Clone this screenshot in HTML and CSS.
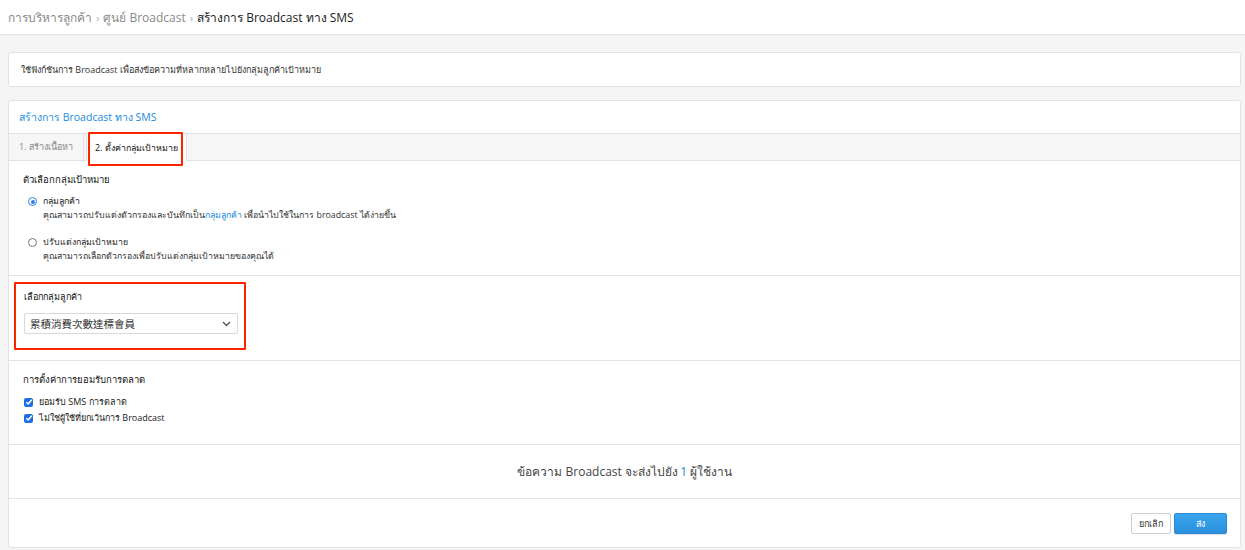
FILE: index.html
```html
<!DOCTYPE html>
<html lang="th">
<head>
<meta charset="utf-8">
<title>สร้างการ Broadcast ทาง SMS</title>
<link rel="stylesheet" href="styles.css">
</head>
<body>
<header class="topbar">
  <nav class="crumbs">
    <span class="crumb">การบริหารลูกค้า</span>
    <span class="sep">›</span>
    <span class="crumb">ศูนย์ Broadcast</span>
    <span class="sep">›</span>
    <span class="crumb current">สร้างการ Broadcast ทาง SMS</span>
  </nav>
</header>
<main class="page">
  <div class="info">ใช้ฟังก์ชันการ Broadcast เพื่อส่งข้อความที่หลากหลายไปยังกลุ่มลูกค้าเป้าหมาย</div>
  <section class="card">
    <div class="card-head">สร้างการ Broadcast ทาง SMS</div>
    <div class="tabs">
      <div class="tab">1. สร้างเนื้อหา</div>
      <div class="tab active">2. ตั้งค่ากลุ่มเป้าหมาย<span class="mark-tab"></span></div>
    </div>
    <div class="sec sec-target">
      <div class="sec-title">ตัวเลือกกลุ่มเป้าหมาย</div>
      <div class="opt">
        <span class="radio on"></span>
        <div class="opt-body">
          <div class="opt-label">กลุ่มลูกค้า</div>
          <div class="opt-desc">คุณสามารถปรับแต่งตัวกรองและบันทึกเป็น<span class="link">กลุ่มลูกค้า</span> เพื่อนำไปใช้ในการ broadcast ได้ง่ายขึ้น</div>
        </div>
      </div>
      <div class="opt">
        <span class="radio"></span>
        <div class="opt-body">
          <div class="opt-label">ปรับแต่งกลุ่มเป้าหมาย</div>
          <div class="opt-desc">คุณสามารถเลือกตัวกรองเพื่อปรับแต่งกลุ่มเป้าหมายของคุณได้</div>
        </div>
      </div>
    </div>
    <div class="sec sec-group">
      <div class="mark-box">
        <div class="field-label">เลือกกลุ่มลูกค้า</div>
        <div class="select">
          <span class="select-text">累積消費次數達標會員</span>
          <svg class="chev" width="9" height="6" viewBox="0 0 9 6"><path d="M1 1 L4.5 4.5 L8 1" fill="none" stroke="#555" stroke-width="1.4"/></svg>
        </div>
      </div>
    </div>
    <div class="sec sec-consent">
      <div class="sec-title">การตั้งค่าการยอมรับการตลาด</div>
      <div class="check-row"><span class="cbox"><svg width="8" height="8" viewBox="0 0 8 8"><path d="M1.3 4.2 L3.2 6 L6.8 1.8" fill="none" stroke="#fff" stroke-width="1.5"/></svg></span>ยอมรับ SMS การตลาด</div>
      <div class="check-row"><span class="cbox"><svg width="8" height="8" viewBox="0 0 8 8"><path d="M1.3 4.2 L3.2 6 L6.8 1.8" fill="none" stroke="#fff" stroke-width="1.5"/></svg></span>ไม่ใช่ผู้ใช้ที่ยกเว้นการ Broadcast</div>
    </div>
    <div class="summary">ข้อความ Broadcast จะส่งไปยัง <span class="count">1</span> ผู้ใช้งาน</div>
    <div class="actions">
      <button class="btn btn-cancel">ยกเลิก</button>
      <button class="btn btn-send">ส่ง</button>
    </div>
  </section>
</main>
</body>
</html>
```

FILE: styles.css
```css
* { box-sizing: border-box; }
html, body { margin: 0; padding: 0; }
body {
  background: #f5f5f5;
  font-family: "Open Sans", "Noto Sans", "Liberation Sans", sans-serif;
  color: #333;
  width: 1245px;
  height: 550px;
  overflow: hidden;
}
.topbar {
  height: 35px;
  background: #fff;
  border-bottom: 1px solid #e4e4e4;
  display: flex;
  align-items: center;
  padding-left: 8px;
}
.crumbs { display: flex; align-items: center; gap: 4px; font-size: 12px; }
.crumb { color: #8a8a8a; }
.crumb.current { color: #222; }
.sep { color: #aaa; font-size: 11px; }
.page { padding: 17px 4px 0 8px; display: flex; flex-direction: column; gap: 13px; }
.info {
  height: 35px;
  background: #fff;
  border: 1px solid #e2e2e2;
  border-radius: 3px;
  display: flex;
  align-items: center;
  padding-left: 12px;
  font-size: 9px;
  color: #333;
}
.card {
  background: #fff;
  border: 1px solid #e2e2e2;
  border-radius: 3px;
  height: 448px;
  display: flex;
  flex-direction: column;
}
.card-head {
  height: 33px;
  display: flex;
  align-items: center;
  padding-left: 10px;
  color: #1b8bdb;
  font-size: 10.5px;
  border-bottom: 1px solid #e2e2e2;
}
.tabs {
  height: 27px;
  background: #f6f6f6;
  border-bottom: 1px solid #e2e2e2;
  display: flex;
  align-items: stretch;
}
.tab {
  position: relative;
  flex: none;
  white-space: nowrap;
  padding: 0 0 0 10px;
  display: flex;
  align-items: center;
  font-size: 9px;
  color: #888;
  border-right: 1px solid #e2e2e2;
  width: 75px;
}
.tab.active {
  background: #fff;
  color: #111;
  width: 101px;
  margin-bottom: -1px;
  padding-left: 8px;
  border-left: 1px solid #e2e2e2;
  margin-left: 2px;
  font-size: 8.8px;
}
.mark-tab {
  position: absolute;
  left: 1px;
  top: -2px;
  width: 95px;
  height: 34px;
  border: 2.5px solid #ff2200;
  border-radius: 1px;
}
.sec { border-bottom: 1px solid #e4e4e4; }
.sec-target { height: 115px; padding: 11px 14px 0 14px; }
.sec-title { font-size: 9.5px; color: #111; margin-bottom: 7px; font-weight: 500; }
.opt { display: flex; gap: 6px; margin-bottom: 13px; }
.radio {
  width: 9px; height: 9px; border-radius: 50%;
  border: 1px solid #777;
  margin: 3px 0 0 5px;
  flex: none;
  position: relative;
  background: #fff;
}
.radio.on { border-color: #2f7fe0; }
.radio.on::after {
  content: "";
  position: absolute; left: 1.5px; top: 1.5px;
  width: 4px; height: 4px; border-radius: 50%;
  background: #2f7fe0;
}
.opt-body { font-size: 8.8px; line-height: 14px; }
.opt-label { color: #222; }
.opt-desc { color: #333; }
.link { color: #1b8bdb; }
.sec-group { height: 85px; padding: 6px 0 0 5px; }
.mark-box {
  width: 232px;
  height: 68px;
  border: 2.5px solid #ff2200;
  border-radius: 1px;
  padding: 6px 0 0 8px;
}
.field-label { font-size: 9px; color: #111; margin-bottom: 9px; font-weight: 500; }
.select {
  width: 214px;
  height: 21px;
  border: 1px solid #d9d9d9;
  border-radius: 2px;
  display: flex;
  align-items: center;
  justify-content: space-between;
  padding: 0 6px 0 5px;
  font-family: "Noto Sans CJK TC", "Noto Sans CJK SC", sans-serif;
  font-size: 10.5px;
  color: #333;
}
.sec-consent { height: 84px; padding: 11px 14px 0 14px; }
.sec-consent .sec-title { margin-bottom: 7px; }
.check-row { display: flex; align-items: center; gap: 6px; font-size: 9px; color: #222; height: 16px; padding-left: 1px; }
.cbox {
  width: 9px; height: 9px; border-radius: 2px;
  background: #1f6fe0;
  display: flex; align-items: center; justify-content: center;
  flex: none;
}
.summary {
  height: 54px;
  border-bottom: 1px solid #e4e4e4;
  display: flex;
  align-items: center;
  justify-content: center;
  font-size: 12px;
  color: #444;
}
.count { color: #1b8bdb; margin: 0 0.2em; }
.actions {
  flex: 1;
  display: flex;
  justify-content: flex-end;
  align-items: flex-start;
  padding: 14px 13px 0 0;
  gap: 3px;
}
.btn {
  font-family: inherit;
  font-size: 9px;
  height: 21px;
  border-radius: 2px;
  cursor: pointer;
}
.btn-cancel {
  width: 40px;
  background: #fff;
  border: 1px solid #cfcfcf;
  color: #333;
}
.btn-send {
  width: 53px;
  background: linear-gradient(#3aa4ec, #2a8fdc);
  border: 1px solid #2a8bd6;
  color: #fff;
  box-shadow: 0 1px 1px rgba(0,0,0,0.15);
}
```
